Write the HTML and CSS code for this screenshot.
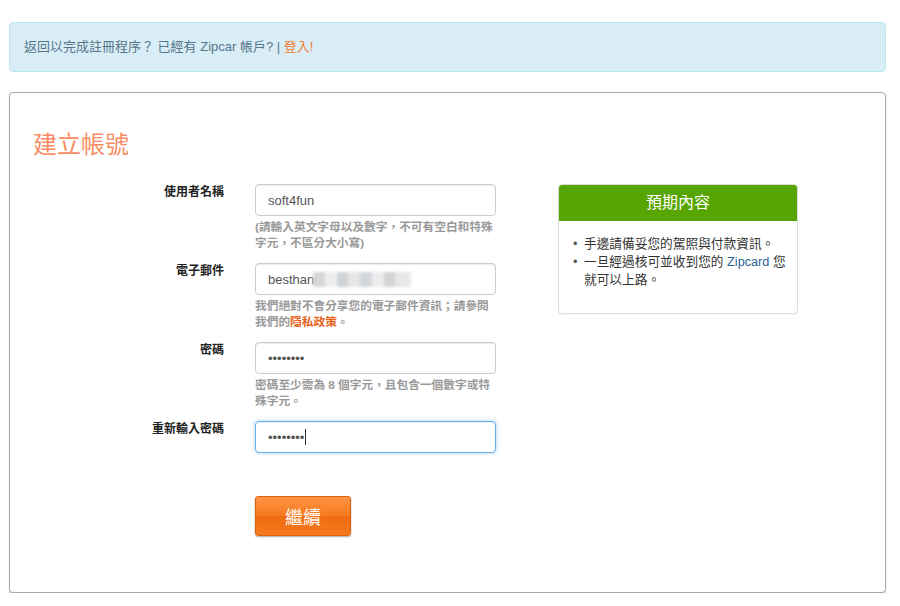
FILE: index.html
```html
<!DOCTYPE html>
<html lang="zh-Hant">
<head>
    <meta charset="UTF-8">
    <meta name="viewport" content="width=device-width, initial-scale=1.0">
    <title>建立帳號 - Zipcar</title>
    <link rel="stylesheet" href="styles.css">
</head>
<body>
    <div class="alert">
        返回以完成註冊程序？ 已經有 Zipcar 帳戶? | <a href="#" class="alert-link">登入!</a>
    </div>

    <div class="panel">
        <h1 class="title">建立帳號</h1>

        <div class="content">
            <form class="signup">
                <div class="form-row">
                    <label for="username">使用者名稱</label>
                    <div class="field">
                        <input type="text" id="username" value="soft4fun">
                        <p class="help">(請輸入英文字母以及數字，不可有空白和特殊字元，不區分大小寫)</p>
                    </div>
                </div>

                <div class="form-row">
                    <label for="email">電子郵件</label>
                    <div class="field">
                        <div class="masked">
                            <input type="text" id="email" value="besthanc">
                            <span class="blur"></span>
                        </div>
                        <p class="help">我們絕對不會分享您的電子郵件資訊；請參閱我們的<a href="#">隱私政策</a>。</p>
                    </div>
                </div>

                <div class="form-row">
                    <label for="password">密碼</label>
                    <div class="field">
                        <input type="password" id="password" value="abcdefgh">
                        <p class="help">密碼至少需為 8 個字元，且包含一個數字或特殊字元。</p>
                    </div>
                </div>

                <div class="form-row">
                    <label for="password2">重新輸入密碼</label>
                    <div class="field">
                        <div class="masked">
                            <input type="password" id="password2" class="focused" value="abcdefgh">
                            <span class="caret"></span>
                        </div>
                    </div>
                </div>

                <div class="actions">
                    <button type="button" class="btn-continue">繼續</button>
                </div>
            </form>

            <div class="expect">
                <div class="expect-head">預期內容</div>
                <ul class="expect-list">
                    <li>手邊請備妥您的駕照與付款資訊。</li>
                    <li>一旦經過核可並收到您的 <a href="#">Zipcard</a> 您就可以上路。</li>
                </ul>
            </div>
        </div>
    </div>
</body>
</html>
```

FILE: styles.css
```css
body {
    margin: 0;
    padding: 22px 14px 0 9px;
    font-family: "Liberation Sans", "Noto Sans CJK TC", sans-serif;
    font-size: 13px;
    color: #333;
    background: #fff;
}

a {
    text-decoration: none;
}

.alert {
    height: 50px;
    box-sizing: border-box;
    padding: 0 14px;
    line-height: 48px;
    background: #d9edf7;
    border: 1px solid #bce8f1;
    border-radius: 4px;
    color: #55768a;
}

.alert-link {
    color: #f0792b;
}

.panel {
    margin-top: 20px;
    height: 501px;
    box-sizing: border-box;
    border: 1px solid #a8a8a8;
    border-radius: 4px;
    box-shadow: 0 1px 1px #a8a8a8;
    padding-top: 37px;
}

.title {
    margin: 0 0 24px 23px;
    font-size: 24px;
    line-height: 30px;
    font-weight: normal;
    color: #f78c62;
}

.content {
    display: flex;
    align-items: flex-start;
}

.signup {
    width: 486px;
}

.form-row {
    display: grid;
    grid-template-columns: 214px 241px;
    column-gap: 31px;
    margin-bottom: 12px;
}

.form-row label {
    text-align: right;
    font-size: 12px;
    font-weight: bold;
    line-height: 16px;
    color: #222;
}

.field input {
    display: block;
    width: 100%;
    height: 32px;
    box-sizing: border-box;
    padding: 0 12px;
    border: 1px solid #ccc;
    border-radius: 4px;
    box-shadow: inset 0 1px 1px rgba(0, 0, 0, 0.075);
    font-family: "Liberation Sans", "Noto Sans CJK TC", sans-serif;
    font-size: 13px;
    color: #555;
    outline: none;
}

.field input.focused {
    border-color: #66afe9;
    box-shadow: inset 0 1px 1px rgba(0, 0, 0, 0.075), 0 0 4px rgba(102, 175, 233, 0.6);
}

.masked {
    position: relative;
}

.blur {
    position: absolute;
    left: 58px;
    top: 9px;
    width: 98px;
    height: 15px;
    background: linear-gradient(90deg, #d6d6d6 0 12%, #eee 12% 24%, #cfd3d6 24% 36%, #e6e6e6 36% 48%, #d2d6da 48% 60%, #ececec 60% 72%, #d4d4d4 72% 84%, #e8e8e8 84% 100%);
    filter: blur(1.5px);
}

.caret {
    position: absolute;
    left: 50px;
    top: 8px;
    width: 1px;
    height: 16px;
    background: #333;
}

.help {
    margin: 3px 0 0;
    font-size: 11.7px;
    line-height: 16px;
    height: 32px;
    font-weight: bold;
    color: #999;
}

.help a {
    color: #e8651d;
}

.actions {
    padding: 31px 0 0 245px;
}

.btn-continue {
    width: 96px;
    height: 40px;
    border: 1px solid #e0610e;
    border-radius: 3px;
    background: linear-gradient(#fd9444, #f6781f 50%, #f26b10 51%, #f47a20);
    box-shadow: 0 1px 2px rgba(0, 0, 0, 0.35);
    color: #fff;
    font-family: "Liberation Sans", "Noto Sans CJK TC", sans-serif;
    font-size: 18px;
    cursor: pointer;
}

.expect {
    margin-left: 62px;
    width: 240px;
    box-sizing: border-box;
    border: 1px solid #ddd;
    border-radius: 4px;
    box-shadow: 0 1px 1px rgba(0, 0, 0, 0.05);
    overflow: hidden;
}

.expect-head {
    height: 36px;
    line-height: 35px;
    background: #56a500;
    color: #fff;
    font-size: 16px;
    text-align: center;
}

.expect-list {
    list-style: none;
    margin: 0;
    padding: 14px 2px 24px 14px;
    font-size: 12.7px;
    line-height: 18px;
    color: #333;
}

.expect-list li {
    position: relative;
    padding-left: 11px;
}

.expect-list li::before {
    content: "•";
    position: absolute;
    left: 0;
    color: #555;
}

.expect-list a {
    color: #2a6496;
}
```
